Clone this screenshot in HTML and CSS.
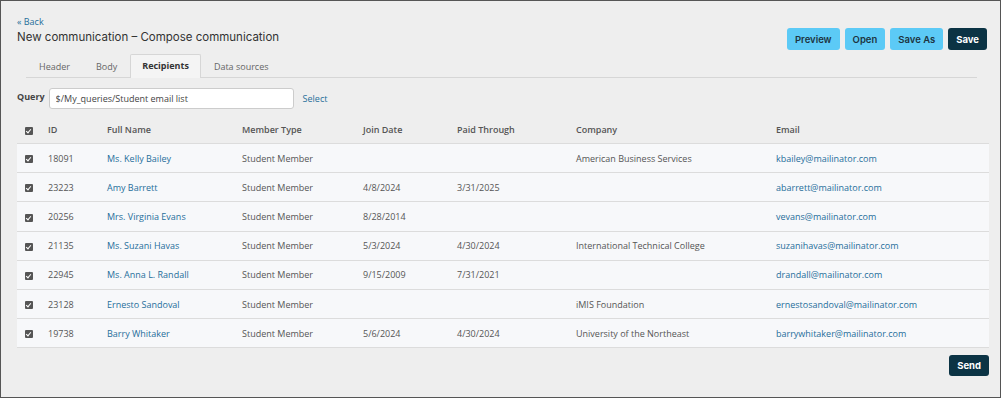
FILE: index.html
```html
<!DOCTYPE html>
<html lang="en">
<head>
    <meta charset="UTF-8">
    <title>New communication</title>
    <link rel="stylesheet" href="styles.css">
</head>
<body>
    <div class="frame">
        <div class="topbar">
            <div class="heading">
                <a class="back" href="#">&laquo; Back</a>
                <h1>New communication &ndash; Compose communication</h1>
            </div>
            <div class="actions">
                <button class="btn btn-light">Preview</button>
                <button class="btn btn-light">Open</button>
                <button class="btn btn-light">Save As</button>
                <button class="btn btn-dark">Save</button>
            </div>
        </div>

        <div class="tabs">
            <span class="tab">Header</span>
            <span class="tab">Body</span>
            <span class="tab active">Recipients</span>
            <span class="tab">Data sources</span>
        </div>

        <div class="query">
            <label>Query</label>
            <input type="text" value="$/My_queries/Student email list">
            <a class="select" href="#">Select</a>
        </div>

        <table class="grid">
            <thead>
                <tr>
                    <th class="c-check"><span class="check"></span></th>
                    <th class="c-id">ID</th>
                    <th class="c-name">Full Name</th>
                    <th class="c-type">Member Type</th>
                    <th class="c-join">Join Date</th>
                    <th class="c-paid">Paid Through</th>
                    <th class="c-comp">Company</th>
                    <th>Email</th>
                </tr>
            </thead>
            <tbody>
                <tr>
                    <td><span class="check"></span></td>
                    <td>18091</td>
                    <td><a href="#">Ms. Kelly Bailey</a></td>
                    <td>Student Member</td>
                    <td></td>
                    <td></td>
                    <td>American Business Services</td>
                    <td><a href="#">kbailey@mailinator.com</a></td>
                </tr>
                <tr>
                    <td><span class="check"></span></td>
                    <td>23223</td>
                    <td><a href="#">Amy Barrett</a></td>
                    <td>Student Member</td>
                    <td>4/8/2024</td>
                    <td>3/31/2025</td>
                    <td></td>
                    <td><a href="#">abarrett@mailinator.com</a></td>
                </tr>
                <tr>
                    <td><span class="check"></span></td>
                    <td>20256</td>
                    <td><a href="#">Mrs. Virginia Evans</a></td>
                    <td>Student Member</td>
                    <td>8/28/2014</td>
                    <td></td>
                    <td></td>
                    <td><a href="#">vevans@mailinator.com</a></td>
                </tr>
                <tr>
                    <td><span class="check"></span></td>
                    <td>21135</td>
                    <td><a href="#">Ms. Suzani Havas</a></td>
                    <td>Student Member</td>
                    <td>5/3/2024</td>
                    <td>4/30/2024</td>
                    <td>International Technical College</td>
                    <td><a href="#">suzanihavas@mailinator.com</a></td>
                </tr>
                <tr>
                    <td><span class="check"></span></td>
                    <td>22945</td>
                    <td><a href="#">Ms. Anna L. Randall</a></td>
                    <td>Student Member</td>
                    <td>9/15/2009</td>
                    <td>7/31/2021</td>
                    <td></td>
                    <td><a href="#">drandall@mailinator.com</a></td>
                </tr>
                <tr>
                    <td><span class="check"></span></td>
                    <td>23128</td>
                    <td><a href="#">Ernesto Sandoval</a></td>
                    <td>Student Member</td>
                    <td></td>
                    <td></td>
                    <td>iMIS Foundation</td>
                    <td><a href="#">ernestosandoval@mailinator.com</a></td>
                </tr>
                <tr>
                    <td><span class="check"></span></td>
                    <td>19738</td>
                    <td><a href="#">Barry Whitaker</a></td>
                    <td>Student Member</td>
                    <td>5/6/2024</td>
                    <td>4/30/2024</td>
                    <td>University of the Northeast</td>
                    <td><a href="#">barrywhitaker@mailinator.com</a></td>
                </tr>
            </tbody>
        </table>

        <div class="footer">
            <button class="btn btn-dark">Send</button>
        </div>
    </div>
</body>
</html>
```

FILE: styles.css
```css
html, body {
    margin: 0;
    height: 100%;
}
body {
    font-family: 'Open Sans', sans-serif;
    font-size: 9px;
    color: #555;
}
a {
    color: #1f6e9a;
    text-decoration: none;
}
.frame {
    box-sizing: border-box;
    height: 398px;
    border: 1px solid #555;
    background: #eeeeee;
    padding: 14px 13px 0 15px;
}
.topbar {
    display: flex;
    justify-content: space-between;
    align-items: flex-end;
}
.back {
    font-size: 9px;
    display: block;
    margin-left: 1px;
}
.heading h1 {
    margin: 2px 0 0 1px;
    font-family: 'Inter', sans-serif;
    font-size: 11.5px;
    font-weight: 400;
    color: #333;
}
.actions {
    display: flex;
    gap: 5px;
    margin-bottom: -6px;
}
.btn {
    font-family: 'Inter', sans-serif;
    font-size: 9.5px;
    font-weight: 600;
    border: none;
    border-radius: 3px;
    padding: 0 8px;
    height: 22px;
    cursor: pointer;
}
.btn-light {
    background: #5ccaf6;
    color: #1d3441;
}
.btn-dark {
    background: #0b3344;
    color: #fff;
    font-weight: 700;
}
.tabs {
    display: flex;
    margin: 10px 10px 0 10px;
    border-bottom: 1px solid #d6d6d6;
    height: 23px;
    align-items: flex-end;
}
.tab {
    padding: 0 12px;
    height: 22px;
    line-height: 21px;
    color: #666;
    border: 1px solid transparent;
    border-bottom: none;
    margin-bottom: -1px;
}
.tab.active {
    background: #f4f4f4;
    border-color: #d6d6d6;
    border-radius: 2px 2px 0 0;
    color: #333;
    font-weight: 700;
    height: 23px;
    padding: 0 11px;
}
.query {
    display: flex;
    align-items: center;
    margin-top: 10px;
}
.query label {
    font-weight: 700;
    color: #444;
    margin: -4px 4px 0 1px;
}
.query input {
    box-sizing: border-box;
    width: 245px;
    height: 21px;
    border: 1px solid #ccc;
    border-radius: 3px;
    padding: 0 6px;
    font-family: 'Open Sans', sans-serif;
    font-size: 9px;
    color: #444;
    background: #fff;
}
.query .select {
    margin-left: 9px;
    color: #1f6e9a;
}
.grid {
    width: 972px;
    margin: 7px 0 0 1px;
    border-collapse: collapse;
}
.grid th {
    text-align: left;
    font-weight: 600;
    color: #555;
    height: 27px;
    padding: 0;
}
.grid td {
    height: 28.2px;
    padding: 0;
    background: #f7f8fa;
    border-top: 1px solid #dcdcdc;
    color: #555;
}
.grid tbody tr:last-child td {
    border-bottom: 1px solid #dcdcdc;
}
.grid th:first-child,
.grid td:first-child {
    padding-left: 8px;
}
.c-check { width: 23px; }
.c-id { width: 59px; }
.c-name { width: 135px; }
.c-type { width: 121px; }
.c-join { width: 94px; }
.c-paid { width: 119px; }
.c-comp { width: 200px; }
.check {
    display: inline-block;
    width: 8px;
    height: 8px;
    border-radius: 1px;
    background: #555;
    position: relative;
    vertical-align: middle;
}
.check::after {
    content: "";
    position: absolute;
    left: 2px;
    top: 1px;
    width: 2px;
    height: 4px;
    border: solid #fff;
    border-width: 0 1px 1px 0;
    transform: rotate(40deg);
}
.footer {
    display: flex;
    justify-content: flex-end;
    margin: 7px -2px 0 0;
}
.footer .btn {
    height: 21px;
    padding: 0 8px;
}
```
